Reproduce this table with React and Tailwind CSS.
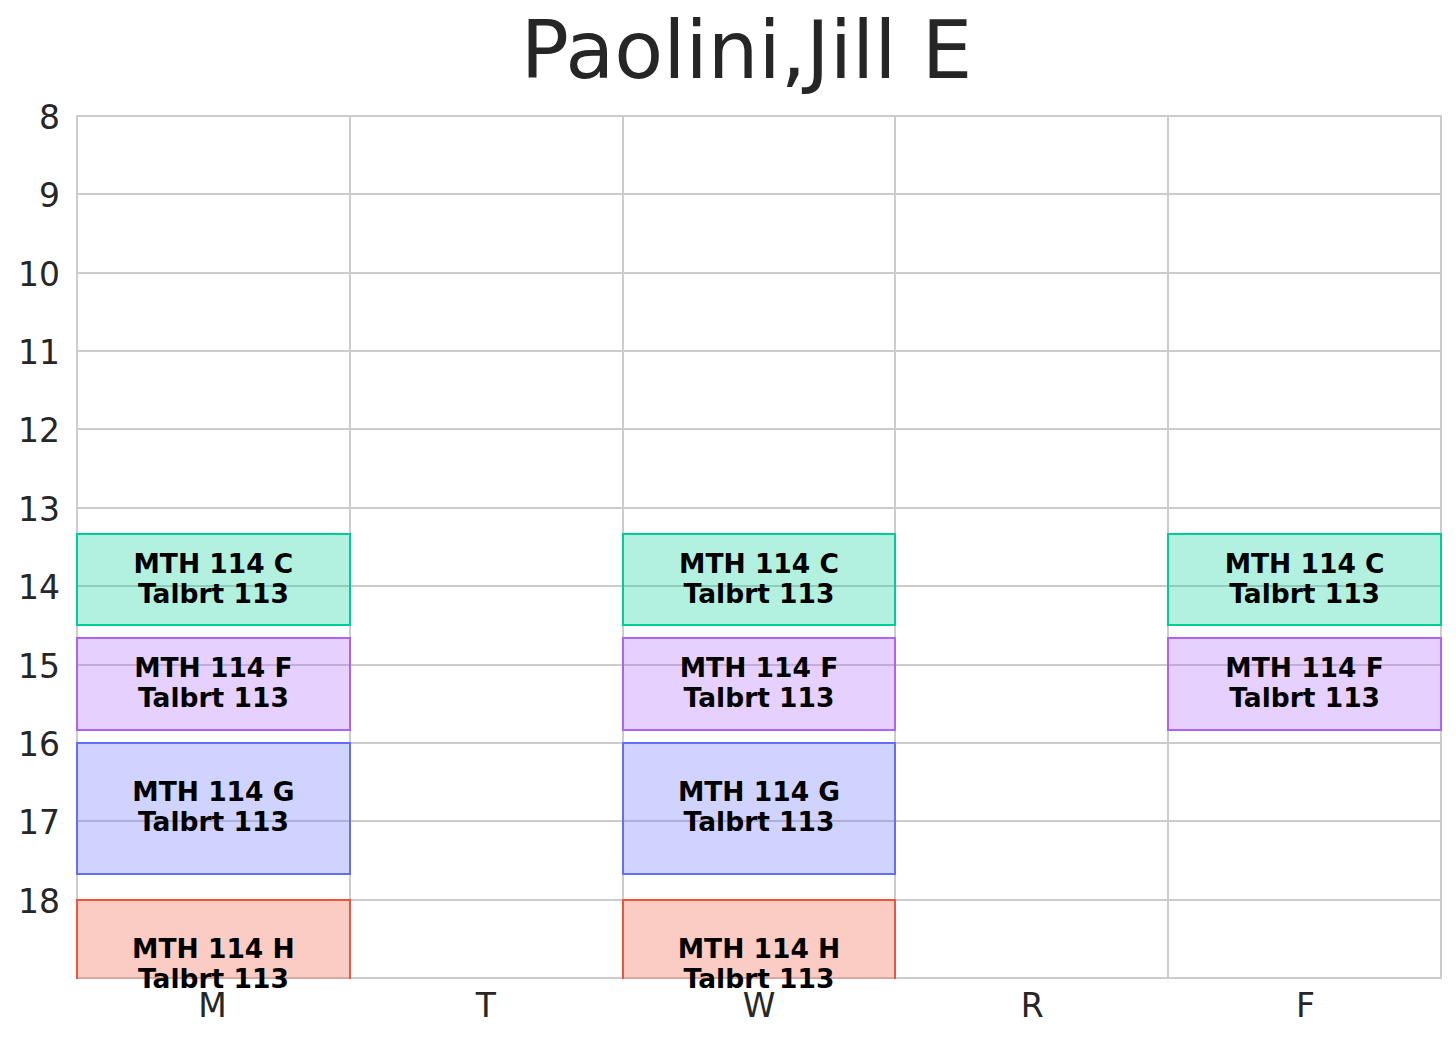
import React from 'react';

const HOUR = 78.364;
const COL = 272.8;

const hours = [8, 9, 10, 11, 12, 13, 14, 15, 16, 17, 18];
const days = ['M', 'T', 'W', 'R', 'F'];

// section styles (plotly palette, fill at 30%)
const sections = [
  { name: 'MTH 114 C', room: 'Talbrt 113', days: [0, 2, 4], start: 13 + 20 / 60, end: 14.5, cls: 'border-[#00cc96] bg-[#00cc96]/30' },
  { name: 'MTH 114 F', room: 'Talbrt 113', days: [0, 2, 4], start: 14 + 40 / 60, end: 15 + 50 / 60, cls: 'border-[#ab63fa] bg-[#ab63fa]/30' },
  { name: 'MTH 114 G', room: 'Talbrt 113', days: [0, 2], start: 16, end: 17 + 40 / 60, cls: 'border-[#636efa] bg-[#636efa]/30' },
  { name: 'MTH 114 H', room: 'Talbrt 113', days: [0, 2], start: 18, end: 19 + 40 / 60, cls: 'border-[#ef553b] bg-[#ef553b]/30' },
];

const blocks = sections.flatMap((s) =>
  s.days.map((d) => ({ ...s, day: d, key: s.name + d }))
);

function boxStyle(b, shift = 0) {
  return {
    left: b.day * COL - 2 + shift,
    top: (b.start - 8) * HOUR - 2,
    width: COL + 2,
    height: (b.end - b.start) * HOUR + 2,
  };
}

export default function App() {
  return (
    <div className="w-[1456px] h-[1040px] bg-white text-[#262626] overflow-hidden" style={{ fontFamily: '"DejaVu Sans", sans-serif' }}>
      {/* title */}
      <div className="h-[115px] flex justify-center pl-[37px] pt-[11px]">
        <h1 className="text-[80px] leading-none whitespace-nowrap">Paolini,Jill E</h1>
      </div>

      <div className="flex">
        {/* y axis */}
        <div className="w-[76px] pr-[16px] flex flex-col items-end">
          {hours.map((h) => (
            <div key={h} className="h-[78.364px] w-full flex justify-end">
              <span className="text-[33px] leading-[33px] -mt-[14px]">{h}</span>
            </div>
          ))}
        </div>

        {/* plot */}
        <div>
          <div className="relative w-[1366px] h-[864px] border-l-2 border-t-2 border-[#cccccc]">
            <div className="grid grid-cols-5 grid-rows-11 h-full">
              {Array.from({ length: 55 }).map((_, i) => (
                <div key={i} className="border-r-2 border-b-2 border-[#cccccc]" />
              ))}
            </div>

            {/* boxes, clipped to the axes */}
            <div className="absolute top-0 bottom-0 -left-[2px] -right-[2px] overflow-hidden">
              {blocks.map((b) => (
                <div key={b.key} className={`absolute border-2 ${b.cls}`} style={boxStyle(b, 2)} />
              ))}
            </div>

            {/* labels, not clipped */}
            <div className="absolute inset-0">
              {blocks.map((b) => (
                <div key={b.key} className="absolute flex flex-col items-center justify-center pb-[2px] text-black font-bold text-[26.5px] leading-[30px] whitespace-nowrap" style={boxStyle(b)}>
                  <span>{b.name}</span>
                  <span>{b.room}</span>
                </div>
              ))}
            </div>
          </div>

          {/* x axis */}
          <div className="grid grid-cols-5 w-[1366px] mt-[10px]">
            {days.map((d) => (
              <div key={d} className="text-center text-[33px] leading-[33px]">{d}</div>
            ))}
          </div>
        </div>
      </div>
    </div>
  );
}
